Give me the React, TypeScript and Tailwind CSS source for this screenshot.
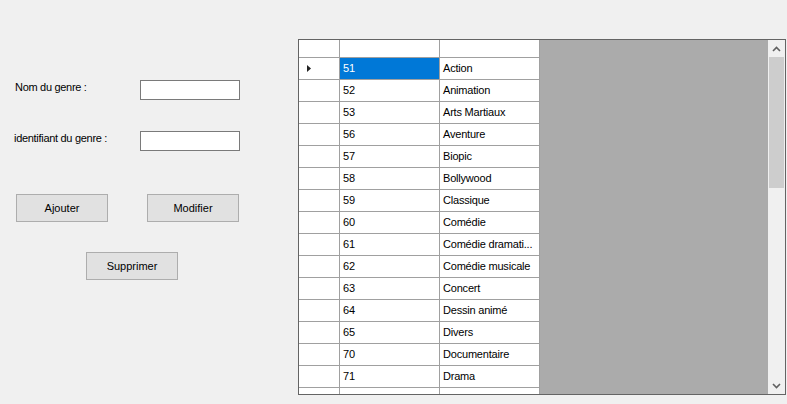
const rows: [string, string][] = [
  ["51", "Action"],
  ["52", "Animation"],
  ["53", "Arts Martiaux"],
  ["56", "Aventure"],
  ["57", "Biopic"],
  ["58", "Bollywood"],
  ["59", "Classique"],
  ["60", "Comédie"],
  ["61", "Comédie dramati..."],
  ["62", "Comédie musicale"],
  ["63", "Concert"],
  ["64", "Dessin animé"],
  ["65", "Divers"],
  ["70", "Documentaire"],
  ["71", "Drama"],
  ["", ""],
];

function WinButton({ label }: { label: string }) {
  return (
    <button className="w-[92px] h-[28px] bg-[#e1e1e1] border border-[#adadad] text-[11px] text-black">
      {label}
    </button>
  );
}

function TextBox() {
  return <input type="text" className="w-[100px] h-[20px] bg-white border border-[#7a7a7a] outline-none" />;
}

export default function App() {
  return (
    <div
      className="w-[787px] h-[404px] bg-[#f0f0f0] flex text-[11px] text-black overflow-hidden"
      style={{ fontFamily: '"Liberation Sans", Arial, sans-serif' }}
    >
      {/* Form side */}
      <div className="w-[298px] shrink-0 pt-[80px]">
        <div className="flex items-start h-[51px]">
          <span className="w-[140px] pl-[15px] -mt-[1px] tracking-[-0.3px]">Nom du genre :</span>
          <TextBox />
        </div>
        <div className="flex items-start h-[63px]">
          <span className="w-[140px] pl-[14px] -mt-[1px] tracking-[-0.3px]">identifiant du genre :</span>
          <TextBox />
        </div>
        <div className="flex gap-[39px] pl-[16px] h-[58px]">
          <WinButton label="Ajouter" />
          <WinButton label="Modifier" />
        </div>
        <div className="pl-[86px]">
          <WinButton label="Supprimer" />
        </div>
      </div>

      {/* Data grid */}
      <div className="mt-[39px] w-[488px] h-[356px] border border-[#646464] flex bg-[#ababab]">
        <div className="w-[241px] bg-white flex flex-col overflow-hidden">
          <div className="flex h-[18px] shrink-0 border-b border-[#a0a0a0]">
            <div className="w-[41px] border-r border-[#a0a0a0]" />
            <div className="w-[100px] border-r border-[#a0a0a0]" />
            <div className="w-[100px] border-r border-[#a0a0a0]" />
          </div>
          {rows.map(([id, name], i) => (
            <div key={i} className="flex h-[22px] shrink-0 border-b border-[#a0a0a0]">
              <div className="w-[41px] border-r border-[#a0a0a0] flex items-center pl-[8px]">
                {i === 0 && (
                  <svg width="4" height="7" viewBox="0 0 4 7">
                    <path d="M0 0 L4 3.5 L0 7 Z" fill="#222" />
                  </svg>
                )}
              </div>
              <div
                className={`w-[100px] border-r border-[#a0a0a0] flex items-center pl-[3px] ${
                  i === 0 ? "bg-[#0078d7] text-white" : ""
                }`}
              >
                {id}
              </div>
              <div className="w-[100px] border-r border-[#a0a0a0] flex items-center pl-[3px] whitespace-nowrap overflow-hidden tracking-[-0.2px]">
                {name}
              </div>
            </div>
          ))}
        </div>
        <div className="flex-1" />
        {/* Scrollbar */}
        <div className="w-[17px] bg-[#f0f0f0] flex flex-col">
          <div className="h-[17px] flex items-center justify-center">
            <svg width="9" height="6" viewBox="0 0 9 6">
              <path d="M1 5 L4.5 1.5 L8 5" stroke="#606060" strokeWidth="1.6" fill="none" />
            </svg>
          </div>
          <div className="mx-[1px] h-[131px] bg-[#cdcdcd]" />
          <div className="flex-1" />
          <div className="h-[17px] flex items-center justify-center">
            <svg width="9" height="6" viewBox="0 0 9 6">
              <path d="M1 1 L4.5 4.5 L8 1" stroke="#606060" strokeWidth="1.6" fill="none" />
            </svg>
          </div>
        </div>
      </div>
    </div>
  );
}
